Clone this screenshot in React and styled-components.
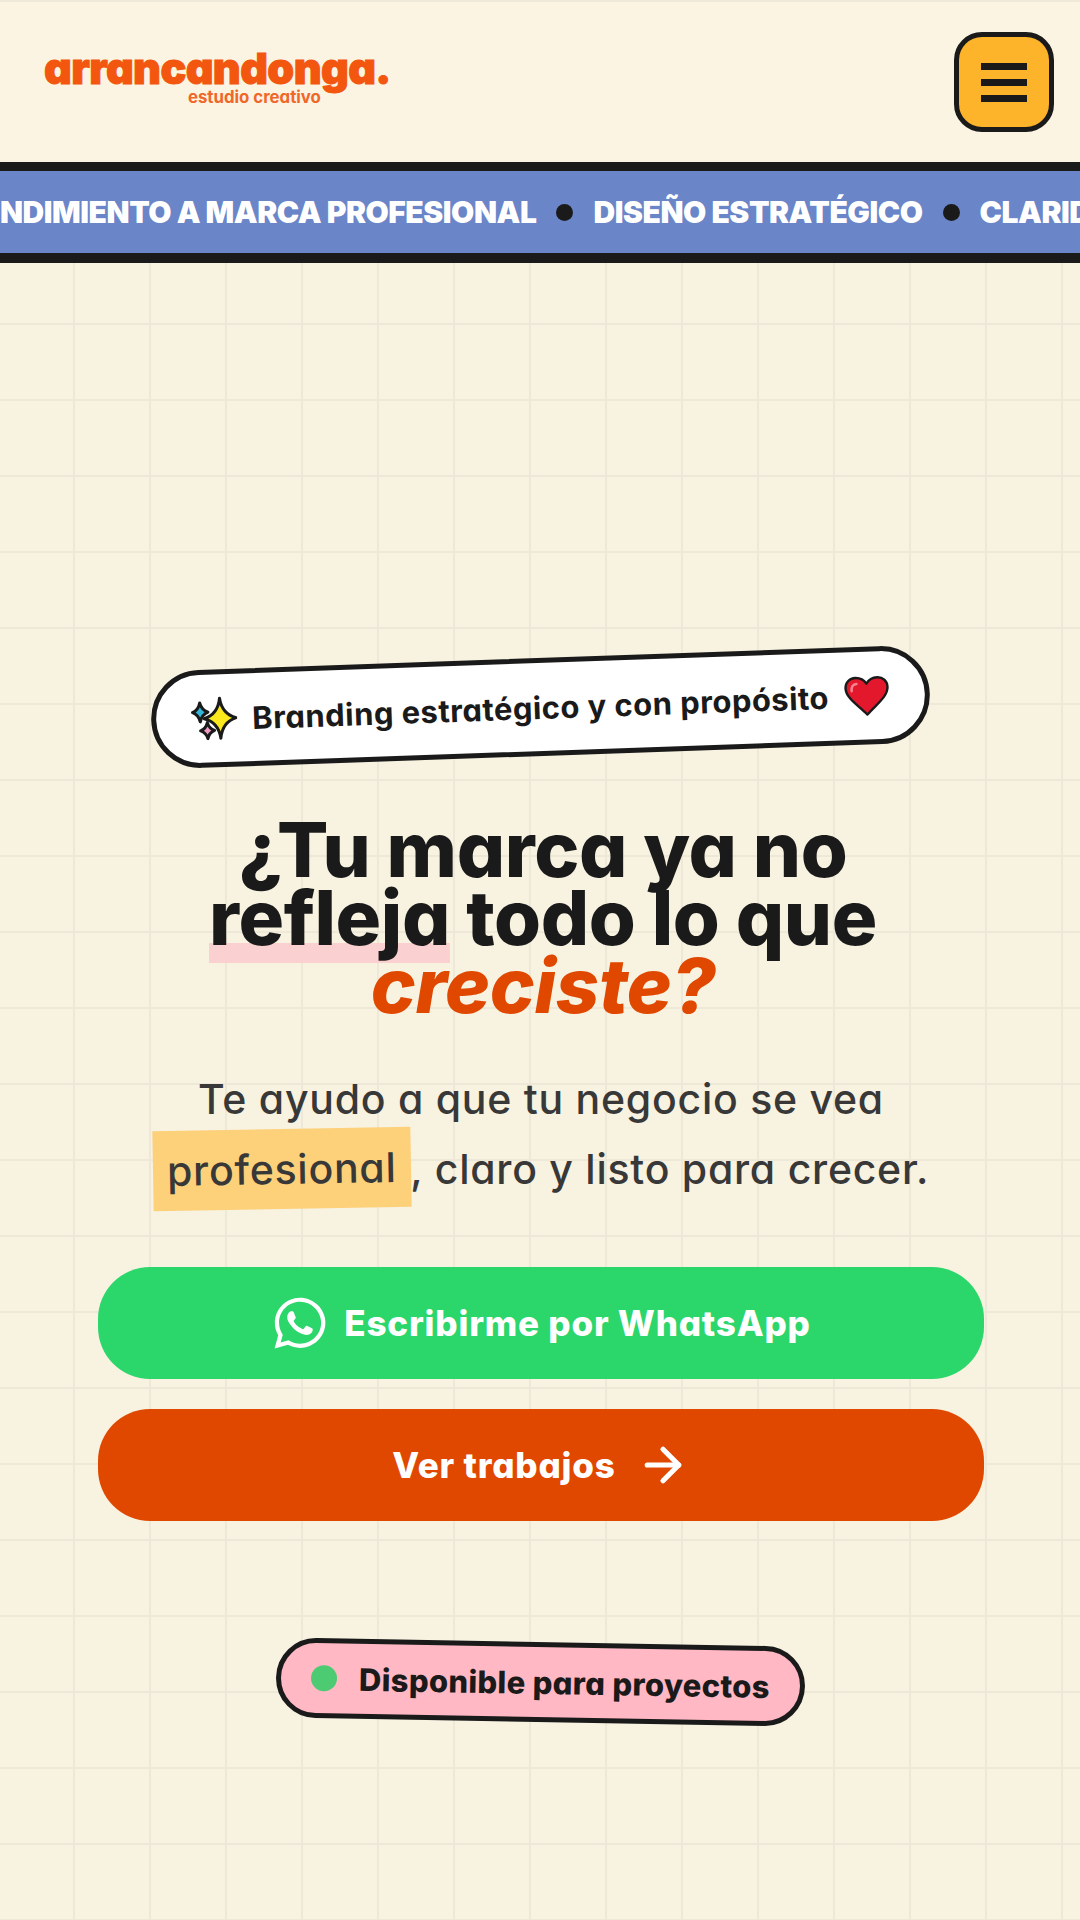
import React from "react";
import styled, { createGlobalStyle } from "styled-components";
import { ArrowRight } from "lucide-react";
import { FaWhatsapp } from "react-icons/fa";

const ink = "#1a1a1a";
const orange = "#e04800";

const GlobalStyle = createGlobalStyle`
  * {
    box-sizing: border-box;
  }

  html,
  body {
    margin: 0;
    padding: 0;
    background: #f8f2e0;
  }

  body {
    font-family: "Inter", "Liberation Sans", sans-serif;
    font-feature-settings: "cv11" 1;
    color: ${ink};
  }
`;

const Page = styled.div`
  width: 1080px;
  height: 1920px;
  overflow: hidden;
  display: flex;
  flex-direction: column;
`;

const Header = styled.header`
  height: 162px;
  flex: none;
  display: flex;
  align-items: center;
  justify-content: space-between;
  padding: 0 26px 0 44px;
  background: #fcf4e2;
  border-top: 2px solid #efe9da;
`;

const Logo = styled.div`
  display: flex;
  flex-direction: column;
  align-items: center;
  margin-top: -14px;
  color: #f2560f;
`;

const LogoName = styled.div`
  font-size: 43px;
  font-weight: 900;
  line-height: 46px;
  letter-spacing: -0.6px;
  -webkit-text-stroke: 1px #f2560f;
`;

const LogoTag = styled.div`
  font-size: 16.8px;
  font-weight: 700;
  line-height: 15px;
  margin-top: -1px;
  margin-left: 74px;
  color: #f0672a;
`;

const MenuButton = styled.button`
  width: 100px;
  height: 100px;
  padding: 0;
  display: flex;
  flex-direction: column;
  align-items: center;
  justify-content: center;
  gap: 9px;
  background: #fdb32a;
  border: 5px solid ${ink};
  border-radius: 28px;
`;

const MenuBar = styled.span`
  width: 46px;
  height: 7px;
  background: ${ink};
`;

const Marquee = styled.div`
  height: 101px;
  flex: none;
  display: flex;
  align-items: center;
  overflow: hidden;
  background: #6a85c8;
  border-top: 9px solid ${ink};
  border-bottom: 10px solid ${ink};
`;

const MarqueeTrack = styled.div`
  display: flex;
  align-items: center;
  gap: 20px;
  flex: none;
  margin-left: -103px;
  white-space: nowrap;
`;

const MarqueeText = styled.span`
  font-size: 30px;
  font-weight: 900;
  letter-spacing: -0.45px;
  color: #fff;
`;

const MarqueeDot = styled.span`
  width: 17px;
  height: 17px;
  flex: none;
  border-radius: 50%;
  background: ${ink};
`;

const Hero = styled.main`
  flex: 1;
  display: flex;
  flex-direction: column;
  align-items: center;
  padding-top: 395px;
  background-color: #f8f2e0;
  background-image:
    linear-gradient(to right, #eee8d8 2px, transparent 2px),
    linear-gradient(to bottom, #eee8d8 2px, transparent 2px);
  background-size: 76px 76px;
  background-position: -3px 60px;
`;

const Badge = styled.div`
  display: flex;
  align-items: center;
  gap: 15px;
  height: 98px;
  padding: 0 35px;
  background: #fff;
  border: 5px solid ${ink};
  border-radius: 49px;
  transform: rotate(-2deg);
`;

const BadgeText = styled.span`
  font-size: 31px;
  font-weight: 700;
  letter-spacing: 0.45px;
`;

const SparkleIcon = styled.svg`
  width: 46px;
  height: 44px;
  flex: none;
`;

const HeartIcon = styled.svg`
  width: 46px;
  height: 41px;
  flex: none;
`;

const Title = styled.h1`
  margin: 59px 0 0;
  padding-left: 6px;
  font-size: 76px;
  font-weight: 800;
  line-height: 68px;
  letter-spacing: -0.4px;
  text-align: center;
`;

const Marked = styled.span`
  background-image: linear-gradient(#fbd0d0, #fbd0d0);
  background-repeat: no-repeat;
  background-size: 100% 20px;
  background-position: 0 100%;
`;

const Accent = styled.em`
  color: ${orange};
  font-style: italic;
`;

const Lead = styled.p`
  margin: 45px 0 0;
  padding-left: 2px;
  font-size: 41px;
  font-weight: 500;
  line-height: 70px;
  letter-spacing: 0.75px;
  text-align: center;
  color: #383838;
`;

const LeadMark = styled.span`
  display: inline-block;
  margin: -5px 0;
  padding: 5px 14px;
  background: #fdd07a;
  transform: rotate(-1deg);
`;

const Actions = styled.div`
  align-self: stretch;
  display: flex;
  flex-direction: column;
  gap: 30px;
  margin-top: 63px;
  padding: 0 96px 0 98px;
`;

const ActionButton = styled.a`
  height: 112px;
  display: flex;
  align-items: center;
  justify-content: center;
  gap: ${props => props.$gap}px;
  background: ${props => props.$color};
  border-radius: 52px;
  color: #fff;
  font-size: 35px;
  font-weight: 800;
  letter-spacing: 0.8px;
`;

const Status = styled.div`
  display: flex;
  align-items: center;
  gap: 22px;
  height: 80px;
  margin-top: 121px;
  padding: 0 30px;
  background: #ffb8c4;
  border: 5px solid ${ink};
  border-radius: 40px;
  transform: rotate(1deg);
`;

const StatusDot = styled.span`
  width: 26px;
  height: 26px;
  border-radius: 50%;
  background: #4ccb73;
`;

const StatusText = styled.span`
  font-size: 31px;
  font-weight: 800;
  letter-spacing: 0.3px;
`;

function Sparkles() {
  return (
    <SparkleIcon viewBox="0 0 46 44">
      <g stroke={ink} strokeWidth="3" strokeLinejoin="round">
        <path d="M9 6Q10.5 13 17 15.5Q10.5 18 9 25Q7.500 18 1.500 15.500Q7.500 13 9 6Z" fill="#33b5d8" />
        <path d="M16 26Q17.500 32 23 34Q17.500 36 16 42Q14.500 36 9 34Q14.500 32 16 26Z" fill="#f29ac4" />
        <path d="M29 2Q31 18 45 22Q31 26 29 42Q27 26 13 22Q27 18 29 2Z" fill="#fbe91e" />
      </g>
    </SparkleIcon>
  );
}

function Heart() {
  return (
    <HeartIcon viewBox="0 0 46 41">
      <path
        d="M23 39C15 30 2 22 2 12C2 6 6.500 2 12 2C16.500 2 20.500 4 23 8C25.500 4 29.500 2 34 2C39.500 2 44 6 44 12C44 22 31 30 23 39Z"
        fill="#e3182d"
        stroke={ink}
        strokeWidth="2.4"
        strokeLinejoin="round"
      />
      <path d="M8 15C7.500 11 9.500 8 13 8" fill="none" stroke="#f7838d" strokeWidth="2.6" strokeLinecap="round" />
    </HeartIcon>
  );
}

export default function App() {
  return (
    <>
      <GlobalStyle />
      <Page>
        <Header>
          <Logo>
            <LogoName>arrancandonga.</LogoName>
            <LogoTag>estudio creativo</LogoTag>
          </Logo>
          <MenuButton aria-label="Menú">
            <MenuBar />
            <MenuBar />
            <MenuBar />
          </MenuButton>
        </Header>

        <Marquee>
          <MarqueeTrack>
            <MarqueeText>EMPRENDIMIENTO A MARCA PROFESIONAL</MarqueeText>
            <MarqueeDot />
            <MarqueeText>DISEÑO ESTRATÉGICO</MarqueeText>
            <MarqueeDot />
            <MarqueeText>CLARIDAD</MarqueeText>
          </MarqueeTrack>
        </Marquee>

        <Hero>
          <Badge>
            <Sparkles />
            <BadgeText>Branding estratégico y con propósito</BadgeText>
            <Heart />
          </Badge>

          <Title>
            ¿Tu marca ya no
            <br />
            <Marked>refleja</Marked> todo lo que
            <br />
            <Accent>creciste?</Accent>
          </Title>

          <Lead>
            Te ayudo a que tu negocio se vea
            <br />
            <LeadMark>profesional</LeadMark>, claro y listo para crecer.
          </Lead>

          <Actions>
            <ActionButton $color="#2bd66b" $gap={15}>
              <FaWhatsapp size={58} />
              Escribirme por WhatsApp
            </ActionButton>
            <ActionButton $color={orange} $gap={20}>
              Ver trabajos
              <ArrowRight size={54} strokeWidth={2.3} />
            </ActionButton>
          </Actions>

          <Status>
            <StatusDot />
            <StatusText>Disponible para proyectos</StatusText>
          </Status>
        </Hero>
      </Page>
    </>
  );
}
